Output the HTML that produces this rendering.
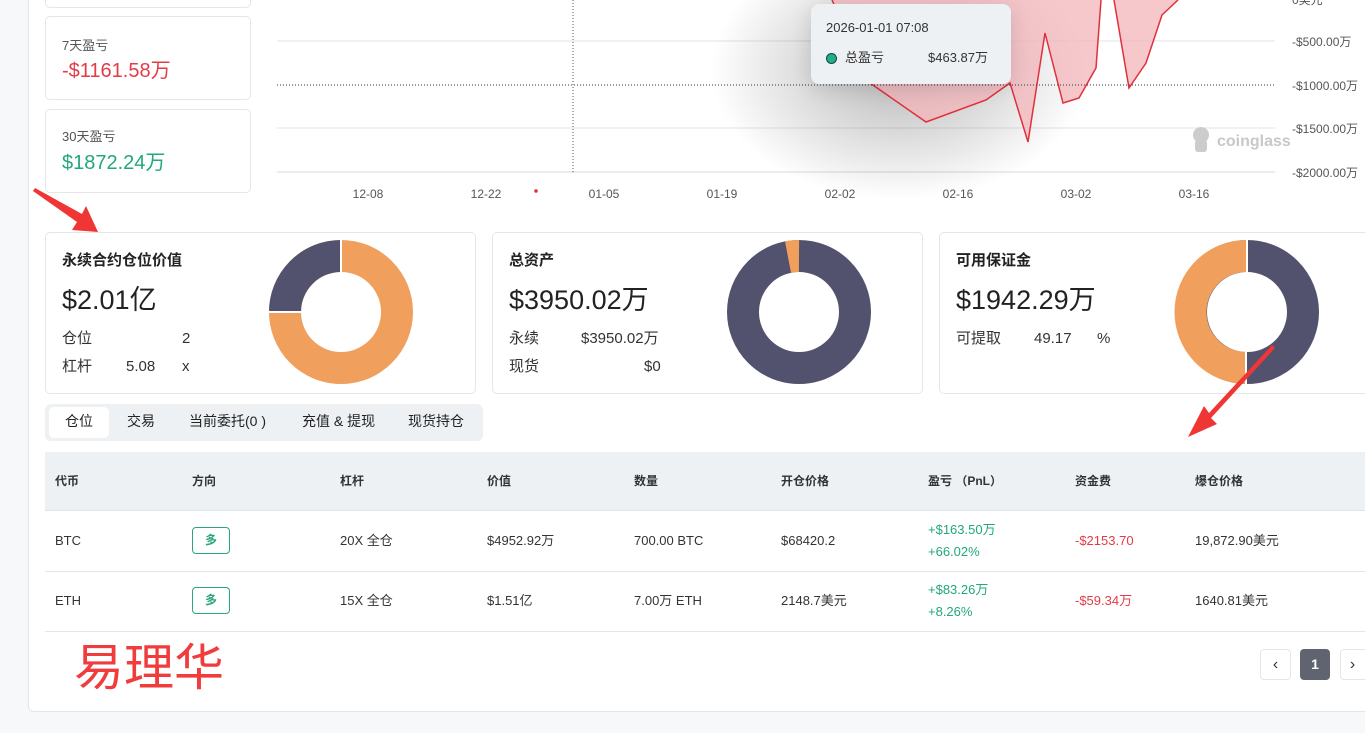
<!DOCTYPE html>
<html><head><meta charset="utf-8"><style>
*{margin:0;padding:0;box-sizing:border-box}
body{width:1365px;height:733px;overflow:hidden;background:#f7f8f9;font-family:"Liberation Sans","Noto Sans CJK SC",sans-serif;color:#333;position:relative}
.abs{position:absolute;line-height:1.2}
.main{position:absolute;left:28px;top:-10px;width:1360px;height:722px;background:#fff;border:1px solid #e6e6e6;border-radius:6px}
.sc{position:absolute;left:45px;width:206px;background:#fff;border:1px solid #e6e6e6;border-radius:5px}
.sc .l{position:absolute;left:16px;font-size:13px;color:#555;line-height:16px}
.sc .v{position:absolute;left:16px;font-size:20px;line-height:24px}
.card{position:absolute;top:232px;height:162px;width:431px;border:1px solid #e6e6e6;border-radius:5px;background:#fff}
.card .t{position:absolute;left:16px;top:18px;font-size:15px;font-weight:bold;color:#222;line-height:20px}
.card .big{position:absolute;left:16px;top:50px;font-size:27px;color:#222;line-height:34px}
.card .r{position:absolute;left:16px;font-size:15px;color:#333;line-height:20px}
.ylab{position:absolute;left:1292px;font-size:12px;color:#555;line-height:14px}
.xlab{position:absolute;top:187px;font-size:12px;color:#555;transform:translateX(-50%);line-height:14px}
.th{position:absolute;top:473px;font-size:12px;font-weight:bold;color:#333;line-height:16px}
.td{position:absolute;font-size:13px;color:#333;line-height:18px}
.g{color:#22a87a}.red{color:#e23c47}
.tag{position:absolute;left:192px;width:38px;height:27px;border:1px solid #2aa57e;border-radius:4px;color:#2aa57e;font-size:12px;font-weight:bold;text-align:center;line-height:25px}
</style></head><body>
<div class="main"></div>
<div class="sc" style="top:-20px;height:28px"></div>
<div class="sc" style="top:16px;height:84px"><div class="l" style="top:21px">7天盈亏</div><div class="v red" style="top:42px">-$1161.58万</div></div>
<div class="sc" style="top:109px;height:84px"><div class="l" style="top:19px">30天盈亏</div><div class="v g" style="top:41px">$1872.24万</div></div>
<svg class="abs" style="left:0;top:0" width="1365" height="210">
<line x1="277" y1="41" x2="1275" y2="41" stroke="#e3e3e3"/>
<line x1="277" y1="128" x2="1275" y2="128" stroke="#e3e3e3"/>
<line x1="277" y1="172" x2="1275" y2="172" stroke="#d8d8d8"/>
<line x1="573" y1="0" x2="573" y2="172" stroke="#555" stroke-dasharray="1,2"/>
<defs><radialGradient id="sh" cx="0.5" cy="0.5" r="0.5"><stop offset="0" stop-color="#000" stop-opacity="0.28"/><stop offset="1" stop-color="#000" stop-opacity="0"/></radialGradient></defs>
<ellipse cx="900" cy="70" rx="190" ry="130" fill="url(#sh)"/>
<polygon points="832,0 870,83 926,122 986,100 1010,83 1028,142 1045,33 1063,103 1079,98 1096,68 1101,0 1114,0 1129,88 1146,63 1162,15 1178,0" fill="#f3b6bb" fill-opacity="0.75"/>
<polyline points="832,0 870,83 926,122 986,100 1010,83 1028,142 1045,33 1063,103 1079,98 1096,68 1101,0" fill="none" stroke="#e0303c" stroke-width="1.5"/>
<polyline points="1114,0 1129,88 1146,63 1162,15 1178,0" fill="none" stroke="#e0303c" stroke-width="1.5"/>
<line x1="277" y1="85" x2="1275" y2="85" stroke="#333" stroke-dasharray="1,2"/>
<circle cx="536" cy="191" r="1.8" fill="#e0303c"/>
<g fill="#ccc"><circle cx="1201" cy="135" r="8"/><rect x="1195" y="140" width="12" height="12" rx="3"/></g>
<text x="1217" y="146" font-size="16" font-weight="bold" fill="#c8c8c8" font-family="Liberation Sans">coinglass</text>
</svg>
<div class="abs" style="left:811px;top:4px;width:200px;height:80px;background:#eef1f4;border-radius:8px;box-shadow:0 4px 20px rgba(0,0,0,.12)">
<div class="abs" style="left:15px;top:16px;font-size:13px;color:#333">2026-01-01 07:08</div>
<div class="abs" style="left:15px;top:49px;width:11px;height:11px;border-radius:50%;background:#20b082;border:1px solid #145"></div>
<div class="abs" style="left:34px;top:46px;font-size:13px;color:#333">总盈亏</div>
<div class="abs" style="left:117px;top:46px;font-size:13px;color:#333">$463.87万</div>
</div>
<div class="ylab" style="top:-7px">0美元</div>
<div class="ylab" style="top:35px">-$500.00万</div>
<div class="ylab" style="top:79px">-$1000.00万</div>
<div class="ylab" style="top:122px">-$1500.00万</div>
<div class="ylab" style="top:166px">-$2000.00万</div>
<div class="xlab" style="left:368px">12-08</div><div class="xlab" style="left:486px">12-22</div><div class="xlab" style="left:604px">01-05</div><div class="xlab" style="left:722px">01-19</div><div class="xlab" style="left:840px">02-02</div><div class="xlab" style="left:958px">02-16</div><div class="xlab" style="left:1076px">03-02</div><div class="xlab" style="left:1194px">03-16</div>
<div class="card" style="left:45px"><div class="t">永续合约仓位价值</div><div class="big">$2.01亿</div>
<div class="r" style="top:96px">仓位</div><div class="r" style="top:96px;left:136px">2</div>
<div class="r" style="top:124px">杠杆</div><div class="r" style="top:124px;left:80px">5.08</div><div class="r" style="top:124px;left:136px">x</div></div>
<div class="card" style="left:492px"><div class="t">总资产</div><div class="big">$3950.02万</div>
<div class="r" style="top:96px">永续</div><div class="r" style="top:96px;left:88px">$3950.02万</div>
<div class="r" style="top:124px">现货</div><div class="r" style="top:124px;left:151px">$0</div></div>
<div class="card" style="left:939px;width:440px"><div class="t">可用保证金</div><div class="big">$1942.29万</div>
<div class="r" style="top:96px">可提取</div><div class="r" style="top:96px;left:94px">49.17</div><div class="r" style="top:96px;left:157px">%</div></div>
<svg class="abs" style="left:0;top:0" width="1365" height="450">
<g fill="none" stroke-width="32">
<circle cx="341" cy="312" r="56" stroke="#f0a05c"/>
<path d="M341 256 A56 56 0 0 0 285 312" stroke="#52526e"/>
<circle cx="799" cy="312" r="56" stroke="#52526e"/>
<path d="M799 256 A56 56 0 0 0 788 257" stroke="#f0a05c"/>
<circle cx="1247" cy="312" r="56" stroke="#52526e"/>
<path d="M1247 256 A56 56 0 0 0 1246 368" stroke="#f0a05c"/>
</g>
<g stroke="#fff" stroke-width="2"><line x1="341" y1="240" x2="341" y2="272"/><line x1="269" y1="312" x2="301" y2="312"/><line x1="1247" y1="240" x2="1247" y2="272"/><line x1="1246" y1="352" x2="1246" y2="384"/></g>
<polygon points="35,188 82,214 86,206 98,232 72,230 77,222 33,191" fill="#f03535"/>
<polygon points="1272,345 1209,413 1204,406 1188,437 1217,424 1211,418 1275,348" fill="#f03535"/>
</svg>
<div class="abs" style="left:45px;top:404px;width:438px;height:37px;background:#eef1f4;border-radius:6px"></div>
<div class="abs" style="left:49px;top:407px;width:60px;height:31px;background:#fff;border-radius:5px"></div>
<div class="abs" style="top:413px;left:65px;font-size:14px;color:#222">仓位</div>
<div class="abs" style="top:413px;left:127px;font-size:14px;color:#222">交易</div>
<div class="abs" style="top:413px;left:189px;font-size:14px;color:#222">当前委托(0 )</div>
<div class="abs" style="top:413px;left:302px;font-size:14px;color:#222">充值 &amp; 提现</div>
<div class="abs" style="top:413px;left:408px;font-size:14px;color:#222">现货持仓</div>
<div class="abs" style="left:45px;top:452px;width:1320px;height:59px;background:#eef1f4;border-bottom:1px solid #e3e3e3"></div>
<div class="abs" style="left:45px;top:571px;width:1320px;height:1px;background:#e6e6e6"></div>
<div class="abs" style="left:45px;top:631px;width:1320px;height:1px;background:#e6e6e6"></div>
<div class="th" style="left:55px">代币</div><div class="th" style="left:192px">方向</div><div class="th" style="left:340px">杠杆</div><div class="th" style="left:487px">价值</div><div class="th" style="left:634px">数量</div><div class="th" style="left:781px">开仓价格</div><div class="th" style="left:928px">盈亏 （PnL）</div><div class="th" style="left:1075px">资金费</div><div class="th" style="left:1195px">爆仓价格</div>
<div class="td" style="left:55px;top:532px">BTC</div><div class="tag" style="top:527px">多</div><div class="td" style="left:340px;top:532px">20X 全仓</div><div class="td" style="left:487px;top:532px">$4952.92万</div><div class="td" style="left:634px;top:532px">700.00 BTC</div><div class="td" style="left:781px;top:532px">$68420.2</div>
<div class="td g" style="left:928px;top:521px">+$163.50万</div><div class="td g" style="left:928px;top:543px">+66.02%</div><div class="td red" style="left:1075px;top:532px">-$2153.70</div><div class="td" style="left:1195px;top:532px">19,872.90美元</div>
<div class="td" style="left:55px;top:592px">ETH</div><div class="tag" style="top:587px">多</div><div class="td" style="left:340px;top:592px">15X 全仓</div><div class="td" style="left:487px;top:592px">$1.51亿</div><div class="td" style="left:634px;top:592px">7.00万 ETH</div><div class="td" style="left:781px;top:592px">2148.7美元</div>
<div class="td g" style="left:928px;top:581px">+$83.26万</div><div class="td g" style="left:928px;top:603px">+8.26%</div><div class="td red" style="left:1075px;top:592px">-$59.34万</div><div class="td" style="left:1195px;top:592px">1640.81美元</div>
<div class="abs" style="left:74px;top:636px;font-size:50px;line-height:56px;color:#f03c3c;font-family:'Noto Sans CJK SC',sans-serif">易理华</div>
<div class="abs" style="left:1260px;top:649px;width:31px;height:31px;border:1px solid #e6e6e6;border-radius:4px;text-align:center;line-height:29px;font-size:16px;color:#333">‹</div>
<div class="abs" style="left:1300px;top:649px;width:30px;height:31px;background:#5f6470;border-radius:4px;text-align:center;line-height:31px;font-size:14px;font-weight:bold;color:#fff">1</div>
<div class="abs" style="left:1340px;top:649px;width:31px;height:31px;border:1px solid #e6e6e6;border-radius:4px;text-align:center;line-height:29px;font-size:16px;color:#333;padding-right:6px">›</div>
</body></html>
